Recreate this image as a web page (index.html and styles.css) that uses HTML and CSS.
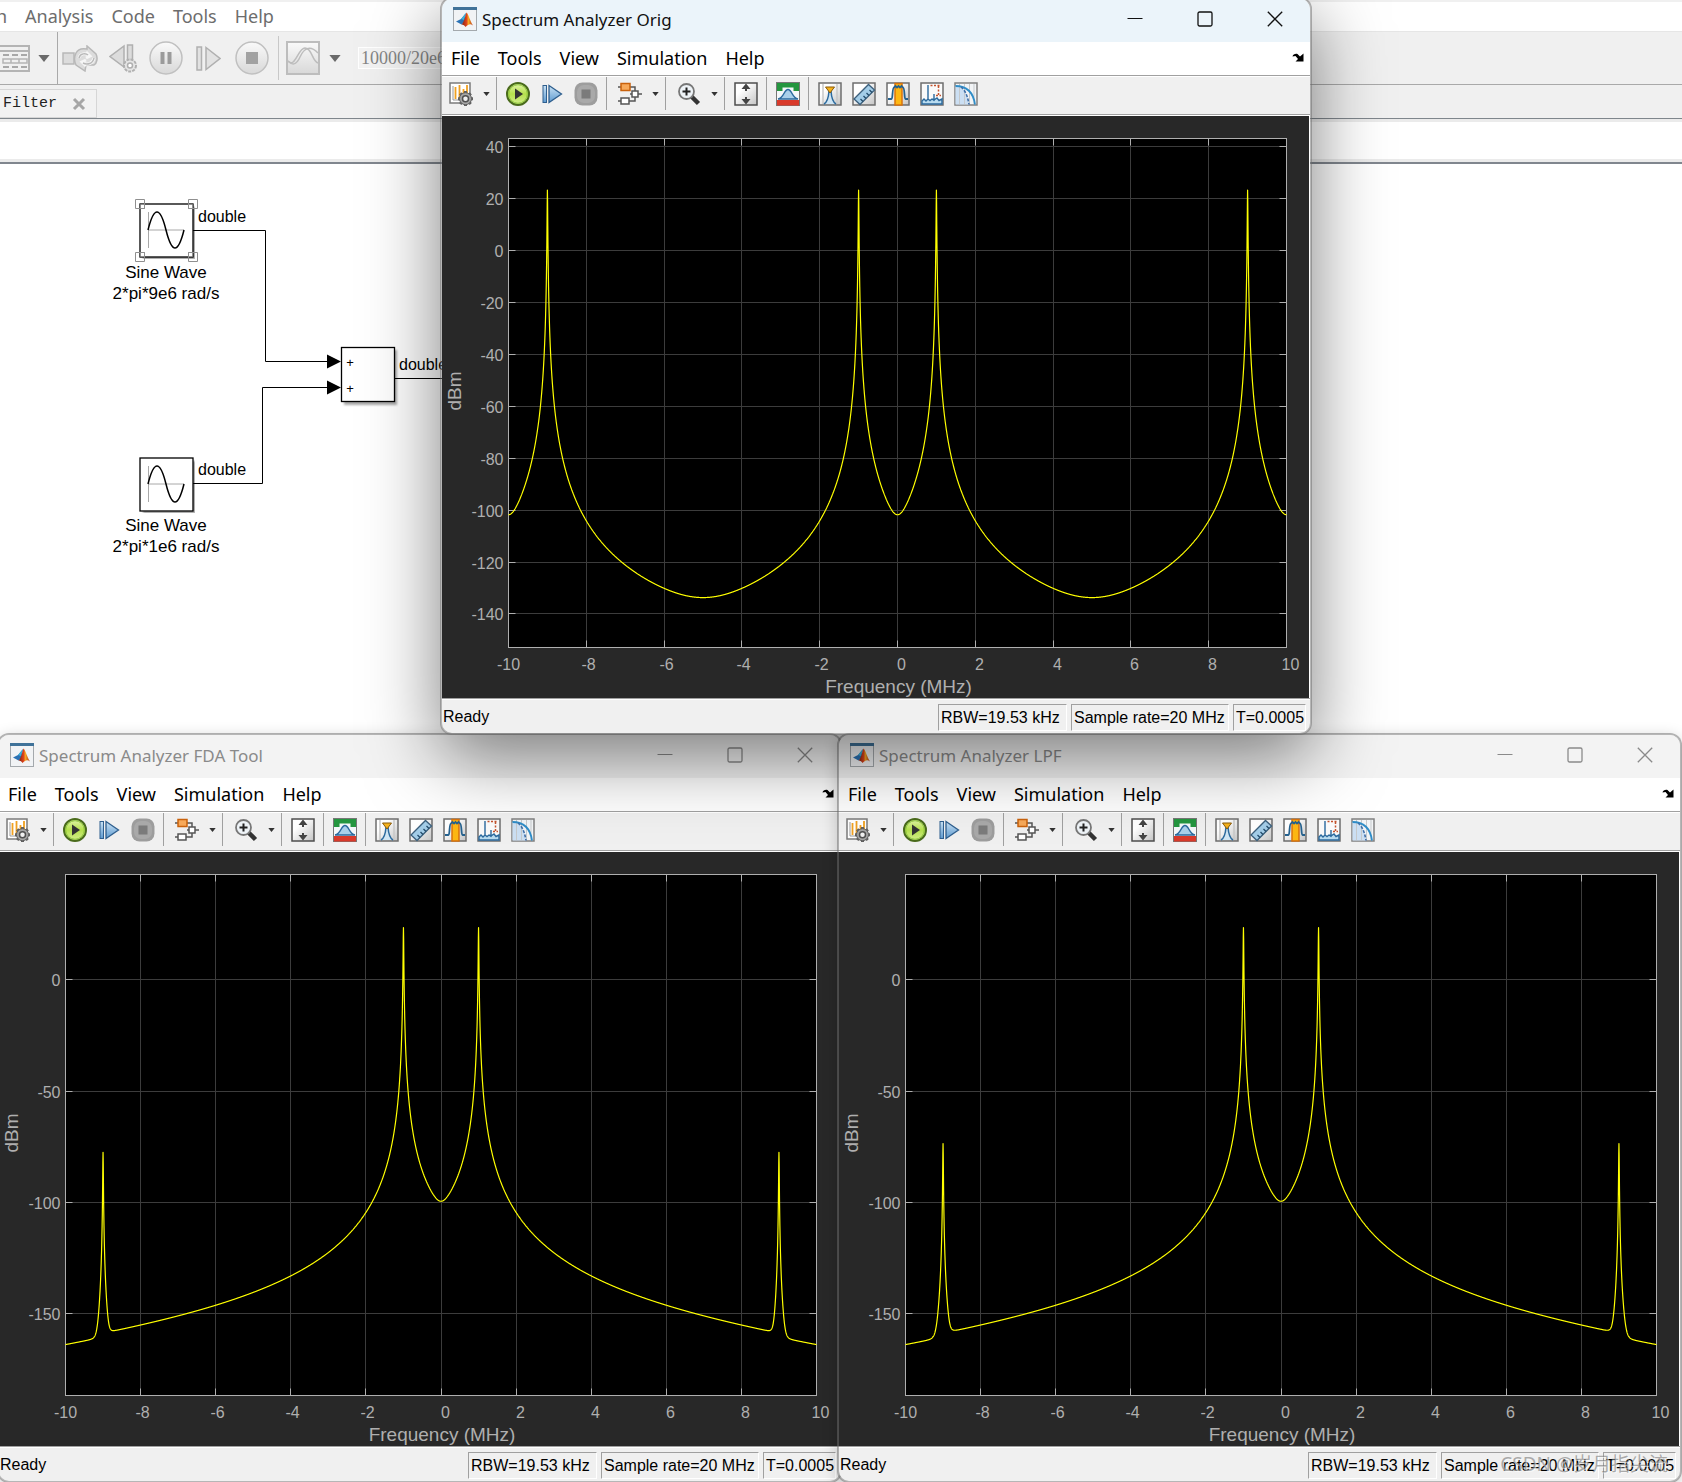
FILE: index.html
```html
<!DOCTYPE html>
<html lang="en">
<head>
    <meta charset="UTF-8">
    <meta name="viewport" content="width=device-width, initial-scale=1.0">
    <title>Filter - Spectrum Analyzer</title>
    <link rel="stylesheet" href="styles.css">
</head>
<body>
    <!-- icon sprite -->
    <svg class="sprite" aria-hidden="true">
        <defs>
            <linearGradient id="gradFrame" x1="0" y1="0" x2="1" y2="1">
                <stop offset="0.3" stop-color="#ffffff"/>
                <stop offset="1" stop-color="#c4c4c4"/>
            </linearGradient>
            <linearGradient id="gradGreen" x1="0" y1="0" x2="0" y2="1">
                <stop offset="0" stop-color="#e4f5b0"/>
                <stop offset="0.5" stop-color="#b5e04c"/>
                <stop offset="1" stop-color="#d5ee92"/>
            </linearGradient>
            <linearGradient id="gradBlue" x1="0" y1="0" x2="0" y2="1">
                <stop offset="0" stop-color="#c9e2f5"/>
                <stop offset="1" stop-color="#5f9bd0"/>
            </linearGradient>
            <linearGradient id="gradFlame" x1="0" y1="0" x2="1" y2="0">
                <stop offset="0" stop-color="#7c1d12"/>
                <stop offset="0.45" stop-color="#e0451c"/>
                <stop offset="0.6" stop-color="#f7a823"/>
                <stop offset="1" stop-color="#b52c14"/>
            </linearGradient>
            <linearGradient id="gradRound" x1="0" y1="0" x2="0" y2="1">
                <stop offset="0" stop-color="#fafafa"/>
                <stop offset="1" stop-color="#d8d8d8"/>
            </linearGradient>
        </defs>
        <symbol id="matlab" viewBox="0 0 24 24">
            <rect x="0.5" y="0.5" width="23" height="23" fill="#f1f3f5" stroke="#a4a9ad"/>
            <rect x="0" y="0" width="24" height="3" fill="#3f7299"/>
            <path d="M3 14.5 L8 12 L13 6 L11.5 15 L8.5 17.5 Z" fill="#2a72b5"/>
            <path d="M8 12 L13 6 L11 13 Z" fill="#3fb0d8"/>
            <path d="M13.5 5.5 C15.500 7 17 14 20 18.5 C17.500 16.500 16 16.500 12.500 20 C11.500 18.500 10.500 17.500 8.500 17.500 C11.500 15 12 9 13.5 5.5 Z" fill="url(#gradFlame)"/>
        </symbol>
        <symbol id="settings" viewBox="0 0 24 24">
            <rect x="1" y="1" width="20" height="20" fill="#fff" stroke="#7b7b7b" stroke-width="1.5"/>
            <path d="M4 4V18H18" fill="none" stroke="#999"/>
            <path d="M6.500 5V17M10.500 3V17M14.500 7V15M18 3V12" stroke="#f0a020" stroke-width="1.800"/>
            <path d="M16.500 9V24M9 16.700H24M11.200 11.400L21.800 22M21.800 11.400L11.200 22" stroke="#606060" stroke-width="3"/>
            <circle cx="16.500" cy="16.700" r="6" fill="#a5a5a5" stroke="#606060"/>
            <circle cx="16.500" cy="16.700" r="3" fill="#f0f0f0" stroke="#505050" stroke-width="1.500"/>
        </symbol>
        <symbol id="play" viewBox="0 0 24 24">
            <circle cx="12" cy="12" r="11" fill="url(#gradGreen)" stroke="#4a6b1c" stroke-width="2"/>
            <circle cx="12" cy="12" r="9.300" fill="none" stroke="#8cc63a"/>
            <path d="M9 6.500L17 12L9 17.500Z" fill="#333"/>
        </symbol>
        <symbol id="step" viewBox="0 0 24 24">
            <rect x="3" y="3.500" width="3.500" height="17" fill="url(#gradBlue)" stroke="#2f5f8e"/>
            <path d="M9 3.500L21.500 12L9 20.500Z" fill="url(#gradBlue)" stroke="#2f5f8e" stroke-width="1.300"/>
        </symbol>
        <symbol id="stop" viewBox="0 0 24 24">
            <rect x="0.500" y="0.500" width="23" height="23" rx="8" fill="#9d9d9d"/>
            <rect x="3" y="3" width="18" height="18" rx="7" fill="#a9a9a9"/>
            <rect x="7.500" y="7.500" width="9" height="9" fill="#7b7b7b"/>
        </symbol>
        <symbol id="blocks" viewBox="0 0 24 24">
            <path d="M0 5H3M12 5H17V9M0 19H3M11 19H17V15M12 12H24" fill="none" stroke="#555" stroke-width="1.500"/>
            <rect x="3" y="1.500" width="9" height="7" fill="#f7a95a" stroke="#c9620c" stroke-width="1.500"/>
            <rect x="3" y="16" width="8" height="6" fill="#fff" stroke="#555" stroke-width="1.500"/>
            <rect x="14" y="9" width="6" height="6" fill="#fff" stroke="#555" stroke-width="1.500"/>
        </symbol>
        <symbol id="zoomin" viewBox="0 0 24 24">
            <path d="M14.500 14.500L21.500 21.500" stroke="#333" stroke-width="4.500"/>
            <circle cx="9.500" cy="9.500" r="7.500" fill="#eef3f7" stroke="#777" stroke-width="1.800"/>
            <path d="M5.500 9.500H13.500M9.500 5.500V13.500" stroke="#222" stroke-width="2"/>
        </symbol>
        <symbol id="fit" viewBox="0 0 24 24">
            <rect x="1" y="1" width="22" height="22" fill="url(#gradFrame)" stroke="#4e4e4e" stroke-width="1.500"/>
            <path d="M12 1.500L16.500 7H7.500ZM12 22.500L16.500 17H7.500Z" fill="#444"/>
            <path d="M12 5V9M12 15V19" stroke="#444" stroke-width="2"/>
        </symbol>
        <symbol id="mask" viewBox="0 0 24 24">
            <rect x="0.500" y="0.500" width="23" height="23" fill="#f4f8fa" stroke="#777"/>
            <path d="M1 1H23V9H17.500V5.500H6.500V9H1Z" fill="#24963f"/>
            <path d="M2 17C8 16 8 7.500 12 7.500S16 16 22 17Z" fill="#a9d0ea" stroke="#2b6a9e" stroke-width="1.300"/>
            <rect x="1" y="18" width="22" height="5.500" fill="#d93a2b"/>
        </symbol>
        <symbol id="peaks" viewBox="0 0 24 24">
            <rect x="1" y="1" width="22" height="22" fill="url(#gradFrame)" stroke="#6e6e6e" stroke-width="1.500"/>
            <path d="M5 2V22M19 2V22" stroke="#c8c8c8" stroke-width="1.500"/>
            <path d="M6 22C9.500 20 10.500 16 11 9H13C13.500 16 14.500 20 18 22" fill="#cfe5f4" stroke="#2b6a9e" stroke-width="1.500"/>
            <path d="M7.500 5H16.500L12 11Z" fill="#f5b21b" stroke="#8a5a0a"/>
        </symbol>
        <symbol id="ruler" viewBox="0 0 24 24">
            <rect x="1" y="1" width="22" height="22" fill="url(#gradFrame)" stroke="#6e6e6e" stroke-width="1.500"/>
            <path d="M2 17L16.500 2.500L22.500 8L8 22.500Z" fill="#a3cde8" stroke="#3b5f7c" stroke-width="1.300"/>
            <path d="M20 10.500L17.500 8M17 13.500L14.500 11M14 16.500L11.500 14M11 19.500L8.500 17" stroke="#234c6c" stroke-width="1.300"/>
        </symbol>
        <symbol id="channel" viewBox="0 0 24 24">
            <rect x="1" y="1" width="22" height="22" fill="url(#gradFrame)" stroke="#6e6e6e" stroke-width="1.500"/>
            <rect x="9" y="1.500" width="7" height="21.500" fill="#fdb813" stroke="#d9730d" stroke-width="1.500"/>
            <path d="M2 17H5.500C7 17 6 6 8 5.500L9.500 4L11 5.500L12.500 4L14 5.500L15.500 4L17 5.500C19 6 18 17 19.500 17H22" fill="none" stroke="#25628f" stroke-width="1.800"/>
        </symbol>
        <symbol id="distortion" viewBox="0 0 24 24">
            <rect x="1" y="1" width="22" height="22" fill="#fafafa" stroke="#6e6e6e" stroke-width="1.500"/>
            <path d="M2 19L4 17L6 19L8 17V3V17L10 18.500L12 17L14 18V12V18L17 16L19 18.500L22 17V22H2Z" fill="#b9dcf0" stroke="#2b6a9e" stroke-width="1.400"/>
            <path d="M10.500 3.500H21" stroke="#c4532d" stroke-width="1.500" stroke-dasharray="2 1.500"/>
            <path d="M16 13.500H21M18.500 4V13" stroke="#c4532d" stroke-width="1.500" stroke-dasharray="2 1.500"/>
        </symbol>
        <symbol id="ccdf" viewBox="0 0 24 24">
            <rect x="1" y="1" width="22" height="22" fill="#f2f4f6" stroke="#808080" stroke-width="1.500"/>
            <path d="M1.500 4C10 5 14 12 15 22.500H1.500Z" fill="#cbdff3"/>
            <path d="M5.500 2V22M10.500 2V22M15.500 2V22M20 2V22" stroke="#c5c9cc"/>
            <path d="M1.500 4C14 4 19.500 12 21 22.500" fill="none" stroke="#2f8dc8" stroke-width="1.800"/>
            <path d="M7 5C12 9 14 16 15 22.500" fill="none" stroke="#3f6fa8" stroke-width="1.600" stroke-dasharray="3 1.500"/>
        </symbol>
        <symbol id="caret" viewBox="0 0 8 5">
            <path d="M0 0H8L4 5Z"/>
        </symbol>
        <symbol id="dock" viewBox="0 0 12 9">
            <path d="M0.500 3.500C1 1.500 3 0.500 5.500 1L8 3.500L11.500 0.500V8.500H3.500L6 6L3.500 3Z" fill="#000"/>
        </symbol>
        <symbol id="min" viewBox="0 0 16 16"><path d="M0.500 7.500H15.500" stroke="currentColor"/></symbol>
        <symbol id="max" viewBox="0 0 16 16"><rect x="1" y="1" width="14" height="14" rx="1.500" fill="none" stroke="currentColor" stroke-width="1.300"/></symbol>
        <symbol id="close" viewBox="0 0 16 16"><path d="M0.800 0.800L15.200 15.200M15.200 0.800L0.800 15.200" stroke="currentColor" stroke-width="1.300"/></symbol>
        <symbol id="sine" viewBox="0 0 56 56">
            <rect x="4" y="4" width="53" height="53" fill="#555" opacity="0.500" filter="blur(1px)"/>
            <rect x="1" y="1" width="53" height="53" fill="#fff" stroke="#000" stroke-width="1.300"/>
            <path d="M9.500 9V45M9.500 27H45" stroke="#a8a8a8" fill="none"/>
            <path d="M9 27C15 3 21 3 27 27S39 51 45 27" stroke="#000" stroke-width="1.500" fill="none"/>
        </symbol>
    </svg>

    <!-- model editor behind the scopes -->
    <main class="editor">
        <nav class="editor-menu">
            <a href="#">n</a>
            <a href="#">Analysis</a>
            <a href="#">Code</a>
            <a href="#">Tools</a>
            <a href="#">Help</a>
        </nav>
        <div class="editor-toolbar">
            <button class="tool-table" aria-label="Model explorer">
                <svg width="30" height="27" viewBox="0 0 30 27" fill="none" stroke="#b4b4b4" stroke-width="2">
                    <path d="M-2 1H29V26H-2M-2 6H29"/>
                    <path d="M3 10H9M12 10H18M21 10H27M3 22H9M12 22H18M21 22H27" stroke="#a8a8a8"/>
                    <path d="M3 14H27V18H3ZM11 14V18M19 14V18" stroke-width="1.500"/>
                </svg>
            </button>
            <button class="tool-caret" aria-label="More"><svg width="12" height="7"><use href="#caret"/></svg></button>
            <span class="editor-sep tall"></span>
            <button aria-label="Update">
                <svg width="36" height="27" viewBox="0 0 36 27" fill="#dcdcdc" stroke="#b8b8b8" stroke-width="1.500">
                    <path d="M1 8H12V19H1Z"/>
                    <path d="M14 8C16 4 20 3 25 4V1L34 9C36 13 35 18 32 20H24L23 26L14 20C12 16 12 12 14 8Z"/>
                    <path d="M17 13C18 8 24 8 26 10M24 7L28 11L24 13M32 13C31 19 25 20 21 18M24 21L20 17L24 15" stroke="#f6f6f6" stroke-width="3"/>
                    <path d="M17 13C18 8 24 8 26 10M32 13C31 19 25 20 21 18" fill="none"/>
                </svg>
            </button>
            <button aria-label="Step back">
                <svg width="28" height="29" viewBox="0 0 28 29" fill="#dcdcdc" stroke="#b0b0b0" stroke-width="1.500">
                    <path d="M15 2V23L1 12.500Z"/>
                    <path d="M18.500 1H23.500V17H18.500Z"/>
                    <circle cx="21" cy="21.500" r="6" fill="#e6e6e6" stroke-width="2" stroke-dasharray="3 1"/>
                    <circle cx="21" cy="21.500" r="2.500" fill="#fff"/>
                </svg>
            </button>
            <button aria-label="Pause">
                <svg width="34" height="34" viewBox="0 0 34 34">
                    <circle cx="17" cy="17" r="16" fill="url(#gradRound)" stroke="#c0c0c0" stroke-width="1.500"/>
                    <path d="M13.500 11V23M20.500 11V23" stroke="#9b9b9b" stroke-width="4"/>
                </svg>
            </button>
            <button aria-label="Step forward">
                <svg width="25" height="25" viewBox="0 0 25 25" fill="#e2e2e2" stroke="#b0b0b0" stroke-width="1.500">
                    <path d="M1 1H5.500V24H1ZM10 1.500L24 12.500L10 23.500Z"/>
                </svg>
            </button>
            <button aria-label="Stop">
                <svg width="34" height="34" viewBox="0 0 34 34">
                    <circle cx="17" cy="17" r="16" fill="url(#gradRound)" stroke="#c0c0c0" stroke-width="1.500"/>
                    <rect x="11" y="11" width="12" height="12" fill="#a2a2a2"/>
                </svg>
            </button>
            <span class="editor-sep"></span>
            <button class="tool-scope" aria-label="Data inspector">
                <svg width="34" height="34" viewBox="0 0 34 34" fill="none" stroke="#bdbdbd" stroke-width="2">
                    <rect x="1" y="1" width="32" height="32" fill="url(#gradRound)"/>
                    <path d="M2 20C9 28 12 7 19 7S26 20 32 22" stroke-width="1.500"/>
                    <path d="M2 20C6 24 10 25 14 16S24 4 32 12" stroke-width="1.500"/>
                </svg>
            </button>
            <button class="tool-caret" aria-label="More"><svg width="12" height="7"><use href="#caret"/></svg></button>
            <input class="stop-time" type="text" value="10000/20e6" aria-label="Simulation stop time">
        </div>
        <div class="editor-tabs">
            <a class="tab" href="#">Filter
                <svg width="14" height="14" viewBox="0 0 14 14"><path d="M2 2L12 12M12 2L2 12" stroke="#a6a6a6" stroke-width="3"/></svg>
            </a>
        </div>
        <div class="breadcrumb"></div>
        <div class="canvas">
            <svg class="diagram" width="900" height="600" viewBox="0 164 900 600">
                <use href="#sine" x="139" y="203" width="56" height="56"/>
                <g fill="none" stroke="#8f8f8f">
                    <path d="M135.500 199.500h9v9h-9zM188.500 199.500h9v9h-9zM135.500 252.500h9v9h-9zM188.500 252.500h9v9h-9z"/>
                    <path d="M140.500 204.500h4v4h-4zM188.500 204.500h4v4h-4zM140.500 252.500h4v4h-4zM188.500 252.500h4v4h-4z"/>
                </g>
                <use href="#sine" x="139" y="457" width="56" height="56"/>

                <rect x="344" y="350" width="53" height="55" fill="#555" opacity="0.500" filter="blur(1px)"/>
                <rect x="341.500" y="347.500" width="53" height="54" fill="#fff" stroke="#000" stroke-width="1.300"/>

                <g class="wire">
                    <path d="M193 230.500H265.500V361.500H330"/>
                    <path d="M193 483.500H262.500V387.500H330"/>
                    <path d="M394 378.500H500"/>
                </g>
                <path d="M327 354.500L341 361.500L327 368.500ZM327 380.500L341 387.500L327 394.500Z"/>

                <g class="signal">
                    <text x="198" y="222">double</text>
                    <text x="198" y="475">double</text>
                    <text x="399" y="370">double</text>
                </g>
                <g class="port">
                    <text x="350" y="367">+</text>
                    <text x="350" y="393">+</text>
                </g>
                <g class="block-name">
                    <text x="166" y="278">Sine Wave</text>
                    <text x="166" y="299">2*pi*9e6 rad/s</text>
                    <text x="166" y="531">Sine Wave</text>
                    <text x="166" y="552">2*pi*1e6 rad/s</text>
                </g>
            </svg>
        </div>
    </main>

    <template id="scopeTemplate">
        <header class="title-bar">
            <svg class="app-icon"><use href="#matlab"/></svg>
            <h2 class="title"></h2>
            <button aria-label="Minimize"><svg><use href="#min"/></svg></button>
            <button aria-label="Maximize"><svg><use href="#max"/></svg></button>
            <button aria-label="Close"><svg><use href="#close"/></svg></button>
        </header>
        <nav class="menu-bar">
            <a href="#">File</a>
            <a href="#">Tools</a>
            <a href="#">View</a>
            <a href="#">Simulation</a>
            <a href="#">Help</a>
            <button class="dock" aria-label="Dock"><svg><use href="#dock"/></svg></button>
        </nav>
        <div class="toolbar">
            <button class="split" aria-label="Configuration"><svg><use href="#settings"/></svg><svg class="caret"><use href="#caret"/></svg></button>
            <span class="sep"></span>
            <button aria-label="Run"><svg><use href="#play"/></svg></button>
            <button aria-label="Step"><svg><use href="#step"/></svg></button>
            <button aria-label="Stop"><svg><use href="#stop"/></svg></button>
            <span class="sep"></span>
            <button class="split" aria-label="Highlight block"><svg><use href="#blocks"/></svg><svg class="caret"><use href="#caret"/></svg></button>
            <span class="sep"></span>
            <button class="split" aria-label="Zoom"><svg><use href="#zoomin"/></svg><svg class="caret"><use href="#caret"/></svg></button>
            <span class="sep"></span>
            <button aria-label="Scale axes"><svg><use href="#fit"/></svg></button>
            <span class="sep"></span>
            <button aria-label="Spectral mask"><svg><use href="#mask"/></svg></button>
            <span class="sep"></span>
            <button aria-label="Peak finder"><svg><use href="#peaks"/></svg></button>
            <button aria-label="Cursor measurements"><svg><use href="#ruler"/></svg></button>
            <button aria-label="Channel measurements"><svg><use href="#channel"/></svg></button>
            <button aria-label="Distortion measurements"><svg><use href="#distortion"/></svg></button>
            <button aria-label="CCDF measurements"><svg><use href="#ccdf"/></svg></button>
        </div>
        <div class="plot-area"><svg class="plot"></svg></div>
        <footer class="status-bar">
            <span class="ready">Ready</span>
            <span class="cell rbw">RBW=19.53 kHz</span>
            <span class="cell rate">Sample rate=20 MHz</span>
            <span class="cell time">T=0.0005</span>
        </footer>
    </template>

    <section class="window fda" data-scope="fda" data-title="Spectrum Analyzer FDA Tool"></section>
    <section class="window lpf" data-scope="lpf" data-title="Spectrum Analyzer LPF"></section>
    <section class="window orig active" data-scope="orig" data-title="Spectrum Analyzer Orig"></section>

    <div class="watermark">CSDN @岁月指尖流</div>

    <script src="script.js"></script>
</body>
</html>
```

FILE: styles.css
```css
* {
    box-sizing: border-box;
}
body {
    margin: 0;
    height: 100vh;
    position: relative;
    overflow: hidden;
    background-color: #f0f0f0;
    font-family: "Noto Sans", "Noto Sans CJK SC", sans-serif;
    color: #000;
}
a {
    color: inherit;
    text-decoration: none;
}
button {
    border: none;
    background: none;
    padding: 0;
    color: inherit;
    display: flex;
    align-items: center;
    justify-content: center;
}
.sprite {
    position: absolute;
    width: 0;
    height: 0;
}

/* model editor */
.editor {
    height: 100%;
    display: flex;
    flex-direction: column;
}
.editor-menu {
    display: flex;
    align-items: center;
    gap: 18px;
    height: 32px;
    padding-bottom: 2px;
    border-top: 2px solid #f0f0f0;
    border-bottom: 1px solid #e6e6e6;
    background-color: #fff;
    color: #6d6d6d;
    font-size: 18px;
    line-height: 24px;
}
.editor-menu a:first-child {
    width: 7px;
    direction: rtl;
}
.editor-toolbar {
    display: flex;
    align-items: center;
    height: 53px;
    border-bottom: 1px solid #a9a9a9;
}
.editor-toolbar button {
    width: 43px;
}
.editor-toolbar .tool-table {
    width: 30px;
}
.editor-toolbar .tool-caret {
    width: 27px;
    fill: #6a6a6a;
}
.editor-toolbar .tool-scope {
    width: 36px;
}
.editor-sep {
    width: 1px;
    height: 44px;
    margin: 0 6px 0 5px;
    background-color: #c8c8c8;
}
.editor-sep.tall {
    height: 100%;
    margin: 0;
    background-color: #a9a9a9;
}
.stop-time {
    width: 220px;
    height: 22px;
    margin-left: 10px;
    padding: 0 2px;
    border: 1px solid #fff;
    background-color: #f3f3f3;
    color: #858585;
    font-family: "Liberation Serif", serif;
    font-size: 18px;
}
.editor-tabs {
    height: 34px;
    padding-top: 4px;
    border-bottom: 1px solid #7f868c;
}
.tab {
    display: flex;
    align-items: center;
    gap: 15px;
    width: 97px;
    height: 29px;
    padding-left: 3px;
    border: 1px solid #d6d6d6;
    border-left: none;
    background-color: #f2f2f2;
    color: #222;
    font-family: "Liberation Mono", monospace;
    font-size: 15px;
}
.breadcrumb {
    height: 45px;
    border-top: 3px solid #ebebeb;
    border-bottom: 2px solid #80868e;
    background-color: #fff;
    box-shadow: inset 0 -3px 0 #ebebeb;
}
.canvas {
    flex: 1;
    background-color: #fff;
    font-family: "Liberation Sans", Arial, sans-serif;
}
.diagram {
    display: block;
}
.wire {
    fill: none;
    stroke: #000;
}
.signal {
    font-size: 16px;
}
.port {
    font-size: 13px;
    text-anchor: middle;
}
.block-name {
    font-size: 17px;
    text-anchor: middle;
}

/* scope windows */
.window {
    position: absolute;
    display: flex;
    flex-direction: column;
    overflow: hidden;
    border: 2px solid rgba(110, 110, 110, 0.5);
    border-radius: 12px;
    background-color: #f0f0f0;
    background-clip: padding-box;
    box-shadow: 0 4px 16px rgba(0, 0, 0, 0.2);
}
.window.fda {
    top: calc(50% - 8px);
    left: -3px;
    right: calc(50% - 1px);
    bottom: -1px;
}
.window.lpf {
    top: calc(50% - 8px);
    left: calc(50% - 4px);
    right: 0;
    bottom: -1px;
}
.window.orig {
    top: -3px;
    left: calc(50% - 401px);
    width: 872px;
    height: calc(50% - 3px);
    box-shadow: 0 22px 72px rgba(0, 0, 0, 0.5);
}
.title-bar {
    display: flex;
    align-items: center;
    height: 43px;
    padding: 0 0 3px 11px;
    background-color: #f3f3f3;
    color: #8a8a8a;
}
.active .title-bar {
    background-color: #ebf4fa;
    color: #111;
}
.title-bar button {
    width: 70px;
}
.title-bar button svg {
    width: 16px;
    height: 16px;
}
.title-bar .app-icon {
    width: 24px;
    height: 24px;
}
.title {
    flex: 1;
    margin: 2px 0 0 5px;
    font-size: 17px;
    line-height: 24px;
    font-weight: normal;
}
.menu-bar {
    display: flex;
    align-items: center;
    gap: 18px;
    height: 33px;
    padding: 0 6px 2px 9px;
    background-color: #fff;
    font-size: 18px;
    line-height: 24px;
}
.dock {
    margin-left: auto;
}
.dock svg {
    width: 12px;
    height: 9px;
}
.toolbar {
    display: flex;
    align-items: center;
    height: 39px;
    padding-bottom: 3px;
    border-top: 1px solid #a0a0a0;
    box-shadow: inset 0 1px 0 #fff;
}
.toolbar button {
    width: 34px;
}
.toolbar svg {
    width: 24px;
    height: 24px;
}
.toolbar .split {
    width: 51px;
    padding-left: 7px;
    gap: 10px;
    justify-content: flex-start;
}
.toolbar .caret {
    width: 7px;
    height: 4px;
    fill: #333;
}
.sep {
    width: 1px;
    height: 33px;
    margin: 0 4px 0 3px;
    background-color: #a0a0a0;
}
.plot-area {
    flex: 1;
    min-height: 0;
    border-top: 1px solid #a0a0a0;
    border-bottom: 1px solid #a0a0a0;
    padding: 1px 1px 0 0;
    background-color: #fff;
}
.plot {
    display: block;
    width: 100%;
    height: 100%;
    background-color: #282828;
    font-family: "Liberation Sans", Arial, sans-serif;
    font-size: 16px;
    fill: #afafaf;
}
.plot .face {
    fill: #000;
}
.plot .grid {
    stroke: #3c3c3c;
}
.plot .axis {
    fill: none;
    stroke: #afafaf;
}
.plot .trace {
    fill: none;
    stroke: #ffff00;
    stroke-width: 1.2;
    stroke-linejoin: round;
}
.plot .x-label {
    text-anchor: middle;
}
.plot .y-label {
    text-anchor: end;
}
.plot .caption {
    font-size: 19px;
    text-anchor: middle;
}
.status-bar {
    display: flex;
    align-items: flex-start;
    gap: 4px;
    height: 34px;
    padding: 4px 4px 0 1px;
    border-top: 1px solid #fff;
    font-family: "Liberation Sans", Arial, sans-serif;
    font-size: 16px;
    line-height: 25px;
}
.ready {
    flex: 1;
}
.cell {
    height: 27px;
    padding-left: 2px;
    border: 1px solid #fff;
    border-top-color: #a0a0a0;
    border-left-color: #a0a0a0;
    white-space: nowrap;
}
.rbw {
    width: 129px;
}
.rate {
    width: 158px;
}
.time {
    width: 73px;
}
.watermark {
    position: absolute;
    right: 14px;
    bottom: 4px;
    font-size: 19px;
    line-height: 28px;
    color: rgba(120, 120, 120, 0.6);
    text-shadow: 1px 1px 0 rgba(255, 255, 255, 0.6);
}
```

FILE: script.js
```js
const SVG_NS = 'http://www.w3.org/2000/svg';

// plot margins inside the dark panel
const PAD = { left: 66, right: 22, top: 22, bottom: 50 };

const FLOOR = -104.5;

// side lobe power of one tone at distance d (MHz)
function tone(d, level) {
    const r = Math.sqrt(d * d + 0.00736 * 0.00736);
    return Math.pow(10, (level - 60 * Math.log10(r)) / 10);
}

// same, repeated every 20 MHz
function aliasedTone(d) {
    return tone(Math.sin(Math.PI * d / 20) * 20 / Math.PI, FLOOR);
}

function origSpectrum(f) {
    let p = 0;
    [-9, -1, 1, 9].forEach(c => {
        p += aliasedTone(f - c);
    });
    return 10 * Math.log10(p) + 0.6 - Math.cos(Math.PI * f / 5);
}

function filteredSpectrum(f, loss) {
    const a = Math.abs(f);
    const main = 10 * Math.log10(tone(f - 1, FLOOR) + tone(f + 1, FLOOR))
        + 2 * Math.exp(-f * f * 4)
        - 1.5 * Math.pow(a / 10, 3)
        - 1.8 / (1 + Math.exp((9 - a) * 20));
    return 10 * Math.log10(Math.pow(10, main / 10) + tone(a - 9, FLOOR - loss));
}

const scopes = {
    orig: { top: 43.1, bottom: -152.9, step: 20, level: origSpectrum },
    fda: { top: 47.4, bottom: -186.8, step: 50, level: f => filteredSpectrum(f, 101) },
    lpf: { top: 47.4, bottom: -186.8, step: 50, level: f => filteredSpectrum(f, 97) }
};

function add(parent, name, attrs, text) {
    const el = document.createElementNS(SVG_NS, name);
    Object.keys(attrs).forEach(key => el.setAttribute(key, attrs[key]));
    if (text !== undefined) {
        el.textContent = text;
    }
    parent.appendChild(el);
    return el;
}

function drawPlot(svg, scope) {
    svg.innerHTML = '';
    const left = PAD.left + 0.5;
    const top = PAD.top + 0.5;
    const width = svg.clientWidth - PAD.left - PAD.right - 1;
    const height = svg.clientHeight - PAD.top - PAD.bottom - 1;
    const right = left + width;
    const bottom = top + height;
    const x = f => left + (f + 10) / 20 * width;
    const y = v => top + (scope.top - v) / (scope.top - scope.bottom) * height;
    const snap = n => Math.floor(n) + 0.5;

    add(svg, 'rect', { class: 'face', x: left, y: top, width: width, height: height });

    let grid = '';
    let ticks = '';
    for (let f = -10; f <= 10; f += 2) {
        const px = snap(x(f));
        if (Math.abs(f) < 10) {
            grid += `M${px} ${top}V${bottom}`;
            ticks += `M${px} ${top}v7M${px} ${bottom}v-7`;
        }
        // labels sit slightly right of their tick, except the first one
        const shift = f === -10 ? 0 : f < 0 ? 2 : 4;
        add(svg, 'text', { class: 'x-label', x: px + shift, y: bottom + 22 }, f);
    }
    const first = Math.floor(scope.top / scope.step) * scope.step;
    for (let v = first; v > scope.bottom; v -= scope.step) {
        const py = snap(y(v));
        grid += `M${left} ${py}H${right}`;
        ticks += `M${left} ${py}h7M${right} ${py}h-7`;
        add(svg, 'text', { class: 'y-label', x: left - 5, y: py + 6 }, v);
    }
    add(svg, 'path', { class: 'grid', d: grid });
    add(svg, 'path', { class: 'axis', d: ticks });
    add(svg, 'rect', { class: 'axis', x: left, y: top, width: width, height: height });

    const points = [];
    for (let i = -2000; i <= 2000; i++) {
        const f = i / 200;
        points.push(x(f).toFixed(2) + ',' + y(scope.level(f)).toFixed(2));
    }
    add(svg, 'polyline', { class: 'trace', points: points.join(' ') });

    add(svg, 'text', { class: 'caption', x: left + width / 2 + 1, y: bottom + 45 }, 'Frequency (MHz)');
    const mid = top + height / 2 - 2;
    add(svg, 'text', { class: 'caption', x: 19, y: mid, transform: `rotate(-90 19 ${mid})` }, 'dBm');
}

const template = document.getElementById('scopeTemplate');

document.querySelectorAll('.window').forEach(win => {
    win.appendChild(template.content.cloneNode(true));
    win.querySelector('.title').textContent = win.dataset.title;
});

function drawAll() {
    document.querySelectorAll('.window').forEach(win => {
        drawPlot(win.querySelector('.plot'), scopes[win.dataset.scope]);
    });
}

drawAll();
window.addEventListener('resize', drawAll);
```
